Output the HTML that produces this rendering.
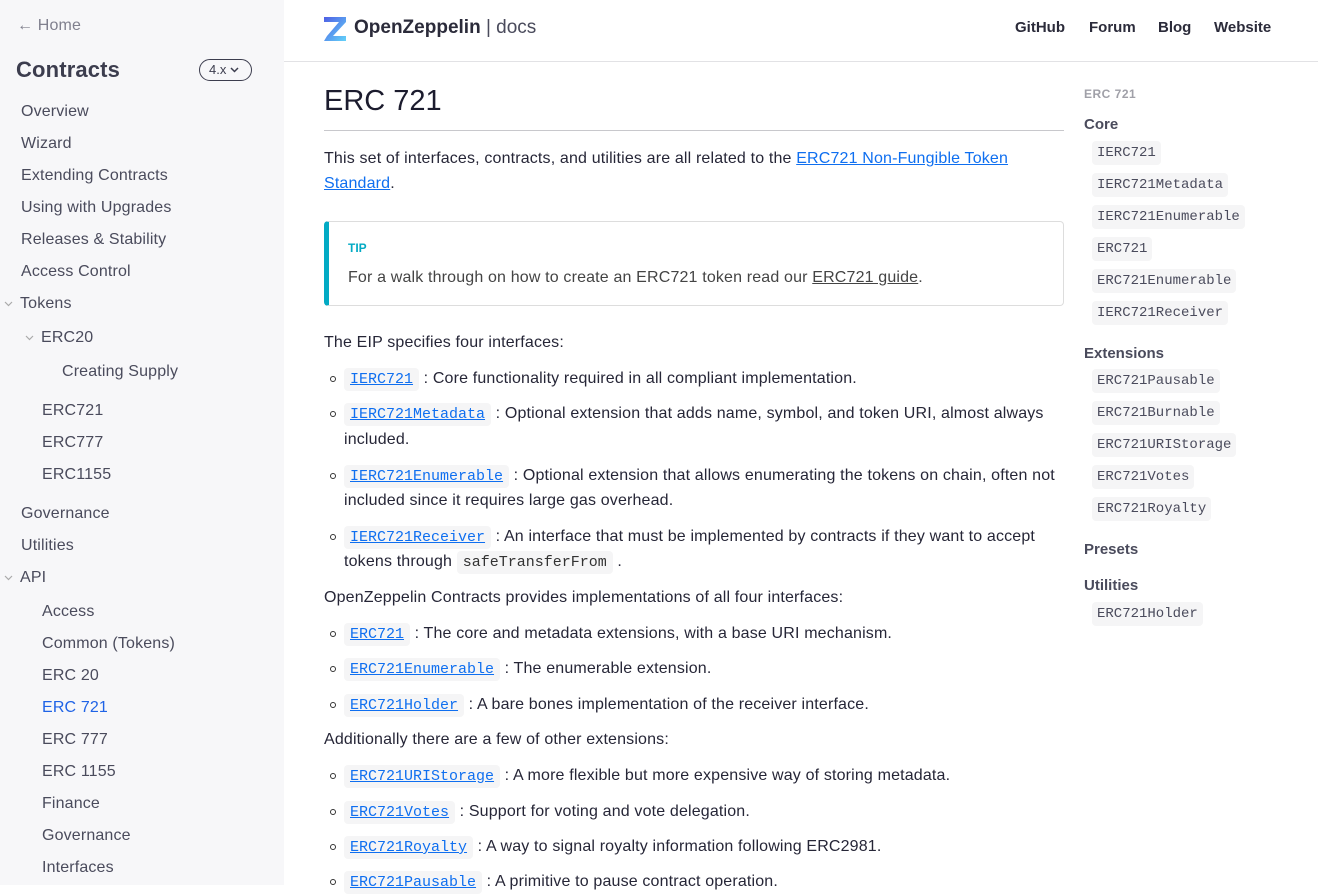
<!DOCTYPE html>
<html><head><meta charset="utf-8">
<style>
*{margin:0;padding:0;box-sizing:border-box}
body{width:1318px;height:884px;overflow:hidden;background:#fff;font-family:"Liberation Sans",sans-serif;color:#1c1c2e;position:relative}
#w{position:absolute;left:0;top:1px;width:1318px;height:884px}
.a{position:absolute;white-space:nowrap}
#side{position:absolute;left:0;top:-1px;width:284px;height:885px;background:#f7f7f9}
.s{position:absolute;font-size:16px;color:#4a4b5c;line-height:20px;white-space:nowrap;letter-spacing:.15px}
.chev{position:absolute}
.m{font-size:16px;line-height:20px;color:#262637;letter-spacing:.16px}
.ic{font-family:"Liberation Mono",monospace;font-size:15px;background:#f5f5f6;padding:3px 6px;border-radius:4px;color:#0f6ff0;text-decoration:underline;letter-spacing:0}
.pc{font-family:"Liberation Mono",monospace;font-size:15px;background:#f5f5f6;padding:3px 6px;border-radius:4px;color:#333;letter-spacing:0}
.b{position:absolute;left:330px;width:6px;height:6px;border:1.2px solid #333;border-radius:50%}
.t{position:absolute;left:1092px;font-family:"Liberation Mono",monospace;font-size:14px;color:#4a4b5c;background:#f5f5f6;padding:3px 5px;border-radius:4px;line-height:18px;white-space:nowrap}
.th{position:absolute;left:1084px;font-size:15px;font-weight:bold;color:#4a4b5c;white-space:nowrap}
a{color:#0f6ff0}
</style></head><body>
<div id="w">
<div id="side"></div>
<div class="s" style="left:17px;top:15px;color:#80808e">← Home</div>
<div class="s" style="left:16px;top:56px;font-size:22px;line-height:26px;font-weight:bold;color:#3c3d4e">Contracts</div>
<div class="a" style="left:199px;top:58px;width:53px;height:22px;border:1.3px solid #3c3d4e;border-radius:11px;font-size:13px;line-height:19px;padding-left:9px;color:#3c3d4e">4.x <svg width="9" height="6" viewBox="0 0 9 6" style="vertical-align:1px"><path d="M1 1L4.5 4.5L8 1" fill="none" stroke="#3c3d4e" stroke-width="1.5"/></svg></div>
<div class="s" style="left:21px;top:101px">Overview</div>
<div class="s" style="left:21px;top:133px">Wizard</div>
<div class="s" style="left:21px;top:165px">Extending Contracts</div>
<div class="s" style="left:21px;top:197px">Using with Upgrades</div>
<div class="s" style="left:21px;top:229px">Releases &amp; Stability</div>
<div class="s" style="left:21px;top:261px">Access Control</div>
<svg class="chev" style="left:4px;top:300px" width="9" height="6" viewBox="0 0 9 6"><path d="M1 1L4.5 4.5L8 1" fill="none" stroke="#aaa" stroke-width="1.2"/></svg>
<div class="s" style="left:20px;top:293px">Tokens</div>
<svg class="chev" style="left:25px;top:334px" width="9" height="6" viewBox="0 0 9 6"><path d="M1 1L4.5 4.5L8 1" fill="none" stroke="#aaa" stroke-width="1.2"/></svg>
<div class="s" style="left:41px;top:327px">ERC20</div>
<div class="s" style="left:62px;top:361px">Creating Supply</div>
<div class="s" style="left:42px;top:400px">ERC721</div>
<div class="s" style="left:42px;top:432px">ERC777</div>
<div class="s" style="left:42px;top:464px">ERC1155</div>
<div class="s" style="left:21px;top:503px">Governance</div>
<div class="s" style="left:21px;top:535px">Utilities</div>
<svg class="chev" style="left:4px;top:574px" width="9" height="6" viewBox="0 0 9 6"><path d="M1 1L4.5 4.5L8 1" fill="none" stroke="#aaa" stroke-width="1.2"/></svg>
<div class="s" style="left:20px;top:567px">API</div>
<div class="s" style="left:42px;top:601px">Access</div>
<div class="s" style="left:42px;top:633px">Common (Tokens)</div>
<div class="s" style="left:42px;top:665px">ERC 20</div>
<div class="s" style="left:42px;top:697px;color:#1f63e6">ERC 721</div>
<div class="s" style="left:42px;top:729px">ERC 777</div>
<div class="s" style="left:42px;top:761px">ERC 1155</div>
<div class="s" style="left:42px;top:793px">Finance</div>
<div class="s" style="left:42px;top:825px">Governance</div>
<div class="s" style="left:42px;top:857px">Interfaces</div>

<svg class="a" style="left:324px;top:16px" width="23" height="24" viewBox="0 0 23 24"><defs><linearGradient id="g" x1="0" y1="0" x2="1" y2="1"><stop offset="0" stop-color="#4e5ee4"/><stop offset="1" stop-color="#63d2f9"/></linearGradient></defs><path d="M0 0H22V5L9 19H22V24H0L3 19L15 5H0Z" fill="url(#g)"/></svg>
<div class="a" style="left:354px;top:16px;font-size:19px;font-weight:bold;color:#2b2b3a">OpenZeppelin <span style="font-weight:normal;color:#4a4b5c">| docs</span></div>
<div class="a" style="left:1015px;top:18px;font-size:15px;font-weight:bold;color:#2b2b3a">GitHub</div>
<div class="a" style="left:1089px;top:18px;font-size:15px;font-weight:bold;color:#2b2b3a">Forum</div>
<div class="a" style="left:1158px;top:18px;font-size:15px;font-weight:bold;color:#2b2b3a">Blog</div>
<div class="a" style="left:1214px;top:18px;font-size:15px;font-weight:bold;color:#2b2b3a">Website</div>
<div class="a" style="left:284px;top:60px;width:1034px;height:1px;background:#e2e2e5"></div>

<div class="a" style="left:324px;top:83px;font-size:29px;line-height:34px;color:#1c1c2e">ERC 721</div>
<div class="a" style="left:324px;top:129px;width:740px;height:1px;background:#c8c8cc"></div>
<div class="a m" style="left:324px;top:148px">This set of interfaces, contracts, and utilities are all related to the <a href="#">ERC721 Non-Fungible Token</a></div>
<div class="a m" style="left:324px;top:173px"><a href="#">Standard</a>.</div>
<div class="a" style="left:324px;top:220px;width:740px;height:85px;border:1px solid #ddd;border-left:5px solid #02aac4;border-radius:4px"></div>
<div class="a" style="left:348px;top:240px;font-size:12px;font-weight:bold;color:#02aac4">TIP</div>
<div class="a m" style="left:348px;top:267px;color:#444">For a walk through on how to create an ERC721 token read our <span style="text-decoration:underline">ERC721 guide</span>.</div>

<div class="a m" style="left:324px;top:332px">The EIP specifies four interfaces:</div>
<div class="b" style="top:375px"></div><div class="a m" style="left:344px;top:368px"><span class="ic">IERC721</span> : Core functionality required in all compliant implementation.</div>
<div class="b" style="top:410px"></div><div class="a m" style="left:344px;top:403px"><span class="ic">IERC721Metadata</span> : Optional extension that adds name, symbol, and token URI, almost always</div>
<div class="a m" style="left:344px;top:429px">included.</div>
<div class="b" style="top:472px"></div><div class="a m" style="left:344px;top:465px"><span class="ic">IERC721Enumerable</span> : Optional extension that allows enumerating the tokens on chain, often not</div>
<div class="a m" style="left:344px;top:490px">included since it requires large gas overhead.</div>
<div class="b" style="top:533px"></div><div class="a m" style="left:344px;top:526px"><span class="ic">IERC721Receiver</span> : An interface that must be implemented by contracts if they want to accept</div>
<div class="a m" style="left:344px;top:551px">tokens through <span class="pc">safeTransferFrom</span> .</div>
<div class="a m" style="left:324px;top:587px">OpenZeppelin Contracts provides implementations of all four interfaces:</div>
<div class="b" style="top:630px"></div><div class="a m" style="left:344px;top:623px"><span class="ic">ERC721</span> : The core and metadata extensions, with a base URI mechanism.</div>
<div class="b" style="top:665px"></div><div class="a m" style="left:344px;top:658px"><span class="ic">ERC721Enumerable</span> : The enumerable extension.</div>
<div class="b" style="top:701px"></div><div class="a m" style="left:344px;top:694px"><span class="ic">ERC721Holder</span> : A bare bones implementation of the receiver interface.</div>
<div class="a m" style="left:324px;top:729px">Additionally there are a few of other extensions:</div>
<div class="b" style="top:772px"></div><div class="a m" style="left:344px;top:765px"><span class="ic">ERC721URIStorage</span> : A more flexible but more expensive way of storing metadata.</div>
<div class="b" style="top:808px"></div><div class="a m" style="left:344px;top:801px"><span class="ic">ERC721Votes</span> : Support for voting and vote delegation.</div>
<div class="b" style="top:843px"></div><div class="a m" style="left:344px;top:836px"><span class="ic">ERC721Royalty</span> : A way to signal royalty information following ERC2981.</div>
<div class="b" style="top:878px"></div><div class="a m" style="left:344px;top:871px"><span class="ic">ERC721Pausable</span> : A primitive to pause contract operation.</div>

<div class="a" style="left:1084px;top:86px;font-size:12px;font-weight:bold;color:#a0a0a8;letter-spacing:.5px">ERC 721</div>
<div class="th" style="top:115px">Core</div>
<div class="t" style="top:140px">IERC721</div>
<div class="t" style="top:172px">IERC721Metadata</div>
<div class="t" style="top:204px">IERC721Enumerable</div>
<div class="t" style="top:236px">ERC721</div>
<div class="t" style="top:268px">ERC721Enumerable</div>
<div class="t" style="top:300px">IERC721Receiver</div>
<div class="th" style="top:344px">Extensions</div>
<div class="t" style="top:368px">ERC721Pausable</div>
<div class="t" style="top:400px">ERC721Burnable</div>
<div class="t" style="top:432px">ERC721URIStorage</div>
<div class="t" style="top:464px">ERC721Votes</div>
<div class="t" style="top:496px">ERC721Royalty</div>
<div class="th" style="top:540px">Presets</div>
<div class="th" style="top:576px">Utilities</div>
<div class="t" style="top:601px">ERC721Holder</div>
</div>
</body></html>
